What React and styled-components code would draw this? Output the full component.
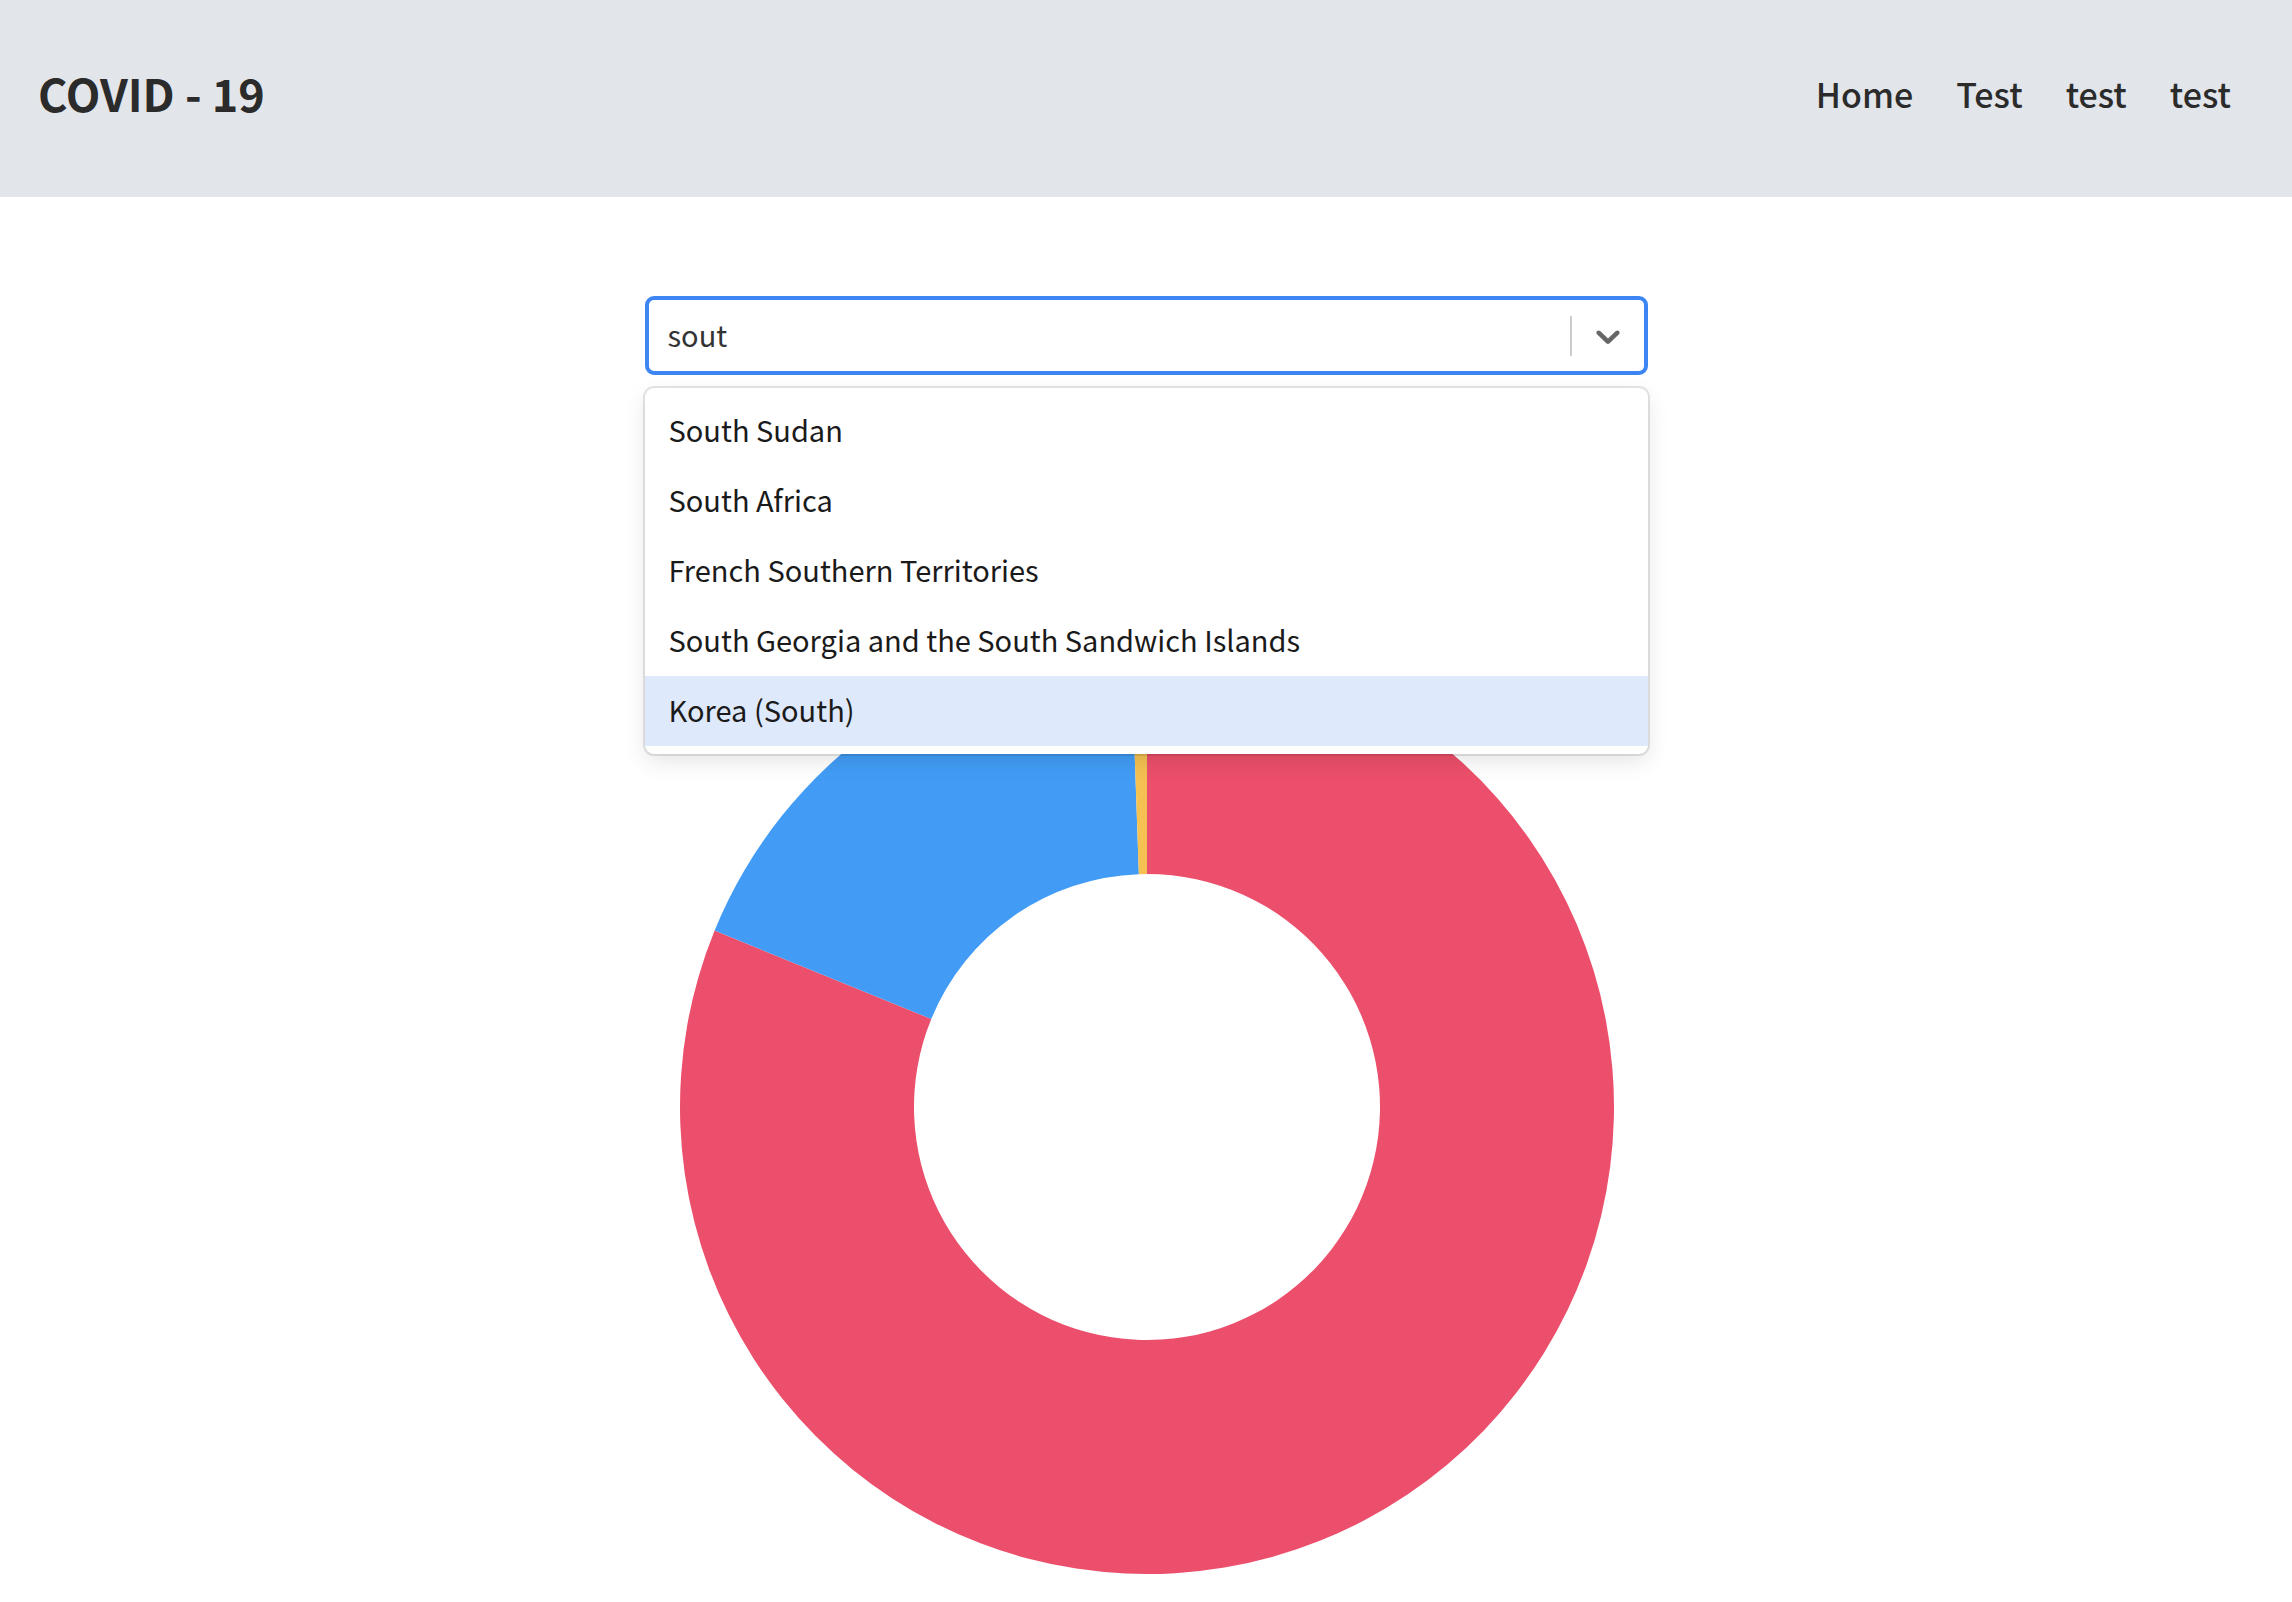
import React from 'react';
import styled, { createGlobalStyle } from 'styled-components';

const GlobalStyle = createGlobalStyle`
  * { box-sizing: border-box; }
  body {
    margin: 0;
    background: #ffffff;
    font-family: "Noto Sans CJK KR", "Noto Sans", sans-serif;
    color: #2b2b2b;
    overflow: hidden;
  }
`;

const Header = styled.header`
  height: 197px;
  background-color: #e2e5ea;
  display: flex;
  align-items: center;
  justify-content: space-between;
  padding: 0 61px 12px 38px;
`;

const Logo = styled.h1`
  margin: 0;
  font-size: 45px;
  font-weight: 700;
  color: #2b2b2b;
`;

const Nav = styled.nav`
  display: flex;
  gap: 43px;
  padding-top: 2px;
`;

const NavLink = styled.a`
  font-size: 34px;
  font-weight: 500;
  color: #2b2b2b;
  text-decoration: none;
`;

const Main = styled.main`
  width: 1003px;
  margin: 0 auto;
  padding-top: 99px;
`;

const SelectWrap = styled.div`
  position: relative;
`;

const Control = styled.div`
  height: 79px;
  display: flex;
  align-items: center;
  border: 4px solid #3d85f3;
  border-radius: 9px;
  background: #fff;
`;

const InputText = styled.div`
  flex: 1;
  padding: 0 0 4px 19px;
  font-size: 29px;
  color: #333;
`;

const Separator = styled.span`
  width: 2px;
  height: 40px;
  background-color: #cccccc;
`;

const Indicator = styled.div`
  width: 72px;
  display: flex;
  align-items: center;
  justify-content: center;
  color: #666;
`;

const Menu = styled.div`
  position: absolute;
  top: 92px;
  left: 0;
  right: 0;
  z-index: 2;
  background: #fff;
  border-radius: 9px;
  box-shadow: 0 0 0 2px rgba(0, 0, 0, 0.1), 0 8px 22px rgba(0, 0, 0, 0.1);
  padding: 8px 0;
`;

const Option = styled.div`
  height: 70px;
  display: flex;
  align-items: center;
  padding: 0 24px 5px;
  font-size: 29px;
  color: #1a1a1a;
  background-color: ${(p) => (p.$focused ? '#dfe9fc' : 'transparent')};
`;

const ChartBox = styled.div`
  margin-top: 265px;
  display: flex;
  justify-content: center;
`;

const options = [
  'South Sudan',
  'South Africa',
  'French Southern Territories',
  'South Georgia and the South Sandwich Islands',
  'Korea (South)',
];

const slices = [
  { value: 292.2, color: '#ec4f6b' },
  { value: 65.8, color: '#429cf6' },
  { value: 2, color: '#f4c152' },
];

const arcPath = (cx, cy, r0, r1, a0, a1) => {
  const rad = (a) => ((a - 90) * Math.PI) / 180;
  const p = (r, a) => [cx + r * Math.cos(rad(a)), cy + r * Math.sin(rad(a))];
  const large = a1 - a0 > 180 ? 1 : 0;
  const [x0, y0] = p(r1, a0);
  const [x1, y1] = p(r1, a1);
  const [x2, y2] = p(r0, a1);
  const [x3, y3] = p(r0, a0);
  return `M${x0} ${y0} A${r1} ${r1} 0 ${large} 1 ${x1} ${y1} L${x2} ${y2} A${r0} ${r0} 0 ${large} 0 ${x3} ${y3} Z`;
};

const Doughnut = () => {
  let start = 0;
  return (
    <svg width="1003" height="934" viewBox="0 0 1003 934">
      {slices.map((s, i) => {
        const d = arcPath(502, 467, 233, 467, start, start + s.value);
        start += s.value;
        return <path key={i} d={d} fill={s.color} />;
      })}
    </svg>
  );
};

const App = () => {
  return (
    <>
      <GlobalStyle />
      <Header>
        <Logo>COVID - 19</Logo>
        <Nav>
          <NavLink href="#">Home</NavLink>
          <NavLink href="#">Test</NavLink>
          <NavLink href="#">test</NavLink>
          <NavLink href="#">test</NavLink>
        </Nav>
      </Header>
      <Main>
        <SelectWrap>
          <Control>
            <InputText>sout</InputText>
            <Separator />
            <Indicator>
              <svg width="40" height="40" viewBox="0 0 20 20" fill="currentColor">
                <path d="M4.516 7.548c0.436-0.446 1.043-0.481 1.576 0l3.908 3.747 3.908-3.747c0.533-0.481 1.141-0.446 1.574 0 0.436 0.445 0.408 1.197 0 1.615-0.406 0.418-4.695 4.502-4.695 4.502-0.217 0.223-0.502 0.335-0.787 0.335s-0.57-0.112-0.789-0.335c0 0-4.287-4.084-4.695-4.502s-0.436-1.17 0-1.615z" />
              </svg>
            </Indicator>
          </Control>
          <Menu>
            {options.map((o, i) => (
              <Option key={o} $focused={i === options.length - 1}>
                {o}
              </Option>
            ))}
          </Menu>
        </SelectWrap>
        <ChartBox>
          <Doughnut />
        </ChartBox>
      </Main>
    </>
  );
};

export default App;
